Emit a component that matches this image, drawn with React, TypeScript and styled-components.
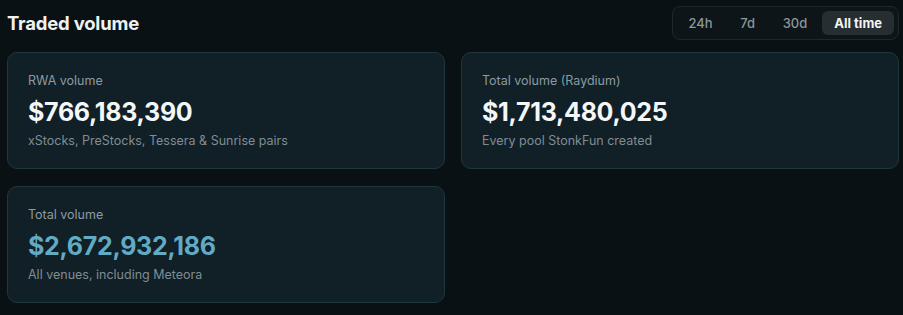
import React, { useState } from "react";
import styled, { createGlobalStyle } from "styled-components";

const Global = createGlobalStyle`
  html, body { margin: 0; padding: 0; background: #0a1114; }
  body { font-family: Inter, "Noto Sans", sans-serif; color: #e8eef0; }
`;

const Page = styled.div`
  padding: 6px 4px 12px 7px;
`;

const Header = styled.div`
  display: flex;
  align-items: center;
  justify-content: space-between;
  margin-bottom: 12px;
`;

const Title = styled.h2`
  margin: 0;
  font-size: 18.5px;
  font-weight: 700;
  letter-spacing: -0.2px;
  color: #eef2f3;
`;

const Segmented = styled.div`
  display: flex;
  gap: 3px;
  padding: 4px;
  border: 1px solid #1e272b;
  border-radius: 8px;
  background: #0d1518;
`;

const SegButton = styled.button<{ $active?: boolean }>`
  font-family: inherit;
  height: 24px;
  padding: 0 12px;
  border: none;
  border-radius: 6px;
  background: ${(p) => (p.$active ? "#262e31" : "transparent")};
  color: ${(p) => (p.$active ? "#f2f5f6" : "#8a979c")};
  font-size: 13px;
  font-weight: ${(p) => (p.$active ? 700 : 500)};
  cursor: pointer;
  min-width: ${(p) => (p.$active ? "71px" : "40px")};
`;

const Grid = styled.div`
  display: grid;
  grid-template-columns: 438px 438px;
  gap: 17px 16px;
`;

const Card = styled.div`
  height: 117px;
  box-sizing: border-box;
  border: 1px solid #1f363d;
  border-radius: 10px;
  background: #111f27;
  padding: 20px 20px;
  display: flex;
  flex-direction: column;
`;

const Label = styled.div`
  font-size: 12.5px;
  color: #8c9ba1;
  line-height: 16px;
`;

const Value = styled.div<{ $accent?: boolean }>`
  font-size: 25px;
  font-weight: 700;
  letter-spacing: -0.3px;
  line-height: 32px;
  margin-top: 7px;
  color: ${(p) => (p.$accent ? "#62abc4" : "#f4f7f8")};
`;

const Sub = styled.div`
  font-size: 12.5px;
  color: #7f8d93;
  line-height: 16px;
  margin-top: 5px;
`;

const ranges = ["24h", "7d", "30d", "All time"];

const cards = [
  { label: "RWA volume", value: "$766,183,390", sub: "xStocks, PreStocks, Tessera & Sunrise pairs" },
  { label: "Total volume (Raydium)", value: "$1,713,480,025", sub: "Every pool StonkFun created" },
  { label: "Total volume", value: "$2,672,932,186", sub: "All venues, including Meteora", accent: true },
];

export default function App() {
  const [range, setRange] = useState("All time");
  return (
    <Page>
      <Global />
      <Header>
        <Title>Traded volume</Title>
        <Segmented>
          {ranges.map((r) => (
            <SegButton key={r} $active={r === range} onClick={() => setRange(r)}>
              {r}
            </SegButton>
          ))}
        </Segmented>
      </Header>
      <Grid>
        {cards.map((c) => (
          <Card key={c.label}>
            <Label>{c.label}</Label>
            <Value $accent={c.accent}>{c.value}</Value>
            <Sub>{c.sub}</Sub>
          </Card>
        ))}
      </Grid>
    </Page>
  );
}
